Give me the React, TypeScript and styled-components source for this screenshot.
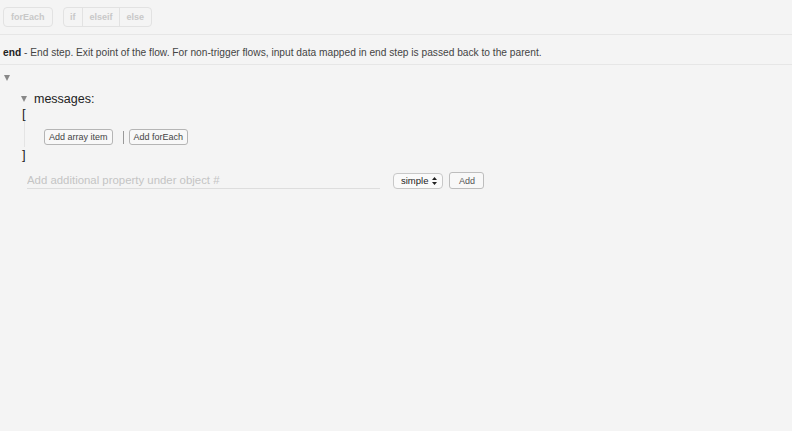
import React from "react";
import styled, { createGlobalStyle } from "styled-components";

const Global = createGlobalStyle`
  html, body { margin: 0; padding: 0; background: #f4f4f4; }
  body { font-family: "Liberation Sans", Arial, sans-serif; color: #333; }
`;

const Page = styled.div`
  width: 792px;
  height: 431px;
  background: #f4f4f4;
  overflow: hidden;
`;

const Toolbar = styled.div`
  display: flex;
  align-items: center;
  gap: 10px;
  padding: 6px 3px 7px;
  height: 21px;
  border-bottom: 1px solid #e6e6e6;
`;

const Group = styled.div`
  display: flex;
  border: 1px solid #e2e2e2;
  border-radius: 4px;
  height: 20px;
  box-sizing: border-box;
`;

const ToolBtn = styled.span<{ $pad?: number }>`
  display: flex;
  align-items: center;
  padding: 0 ${(p) => p.$pad ?? 6}px;
  font-size: 9px;
  font-weight: bold;
  color: #c8c8c8;
  & + & { border-left: 1px solid #e2e2e2; }
`;

const Desc = styled.div`
  padding: 12px 3px 0;
  height: 17px;
  font-size: 10.2px;
  color: #444;
  border-bottom: 1px solid #e6e6e6;
  b { color: #222; }
`;

const Body = styled.div`
  display: flex;
  flex-direction: column;
  padding: 10px 0 0 4px;
`;

const Tri = styled.span`
  display: block;
  width: 0;
  height: 0;
  border-left: 3px solid transparent;
  border-right: 3px solid transparent;
  border-top: 6px solid #888;
`;

const Inner = styled.div`
  display: flex;
  flex-direction: column;
  padding: 11px 0 0 17px;
`;

const KeyRow = styled.div`
  display: flex;
  align-items: center;
  gap: 7px;
  font-size: 12.5px;
  color: #222;
  height: 14px;
`;

const Bracket = styled.div`
  font-size: 13px;
  color: #222;
  line-height: 15px;
  height: 15px;
  padding-left: 1px;
`;

const ArrayBody = styled.div`
  margin-left: 3px;
  border-left: 1px solid #e4e4e4;
  padding: 8px 0 2px 19px;
  display: flex;
  align-items: center;
`;

const SmallBtn = styled.button`
  font-family: "Liberation Sans", Arial, sans-serif;
  font-size: 9px;
  color: #444;
  background: #f8f8f8;
  border: 1px solid #b5b5b5;
  border-radius: 3px;
  height: 16px;
  padding: 0 4px;
  line-height: 14px;
`;

const Sep = styled.span`
  display: inline-block;
  width: 1px;
  height: 13px;
  background: #999;
  margin: 0 5px 0 10px;
`;

const AddRow = styled.div`
  display: flex;
  align-items: center;
  padding: 10px 0 0 23px;
`;

const PropInput = styled.input`
  width: 353px;
  border: none;
  border-bottom: 1px solid #ddd;
  background: transparent;
  font-family: "Liberation Sans", Arial, sans-serif;
  font-size: 11.4px;
  padding: 0 0 1px 0;
  height: 15px;
  outline: none;
  &::placeholder { color: #c4c4c4; }
`;

const Select = styled.div`
  margin-left: 13px;
  display: flex;
  align-items: center;
  gap: 4px;
  height: 16px;
  box-sizing: border-box;
  border: 1px solid #c8c8c8;
  border-radius: 4px;
  background: #fafafa;
  padding: 0 5px 0 7px;
  font-size: 9.5px;
  color: #222;
`;

const AddBtn = styled(SmallBtn)`
  margin-left: 6px;
  height: 17px;
  width: 35px;
  padding: 0;
  color: #555;
  border-color: #bdbdbd;
`;

const Arrows = () => (
  <svg width="5" height="8" viewBox="0 0 5 8">
    <path d="M2.5 0 L5 3 L0 3 Z M2.5 8 L5 5 L0 5 Z" fill="#222" />
  </svg>
);

export default function App() {
  return (
    <Page>
      <Global />
      <Toolbar>
        <Group>
          <ToolBtn $pad={7}>forEach</ToolBtn>
        </Group>
        <Group>
          <ToolBtn $pad={6.5}>if</ToolBtn>
          <ToolBtn $pad={6.5}>elseif</ToolBtn>
          <ToolBtn $pad={6.5}>else</ToolBtn>
        </Group>
      </Toolbar>
      <Desc>
        <b>end</b> - End step. Exit point of the flow. For non-trigger flows, input data mapped in end step is passed back to the parent.
      </Desc>
      <Body>
        <Tri />
        <Inner>
          <KeyRow>
            <Tri />
            <span>messages:</span>
          </KeyRow>
          <Bracket>[</Bracket>
          <ArrayBody>
            <SmallBtn>Add array item</SmallBtn>
            <Sep />
            <SmallBtn>Add forEach</SmallBtn>
          </ArrayBody>
          <Bracket>]</Bracket>
        </Inner>
        <AddRow>
          <PropInput placeholder="Add additional property under object #" />
          <Select>
            <span>simple</span>
            <Arrows />
          </Select>
          <AddBtn>Add</AddBtn>
        </AddRow>
      </Body>
    </Page>
  );
}
